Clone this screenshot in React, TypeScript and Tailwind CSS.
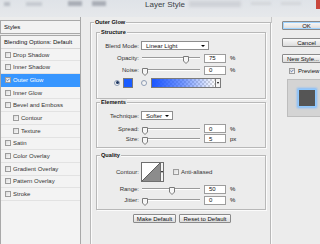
import { Check } from 'lucide-react';
import type { ReactNode } from 'react';

const font = { fontFamily: '"Liberation Sans", Arial, sans-serif' };

const styleRows = [
  { name: 'Drop Shadow' },
  { name: 'Inner Shadow' },
  { name: 'Outer Glow', checked: true, active: true },
  { name: 'Inner Glow' },
  { name: 'Bevel and Emboss' },
  { name: 'Contour', indent: true },
  { name: 'Texture', indent: true },
  { name: 'Satin' },
  { name: 'Color Overlay' },
  { name: 'Gradient Overlay' },
  { name: 'Pattern Overlay' },
  { name: 'Stroke' },
];

const CheckBox = ({ checked = false }: { checked?: boolean }) => (
  <span className="flex h-[6px] w-[6px] shrink-0 items-center justify-center border border-[#9c9c9c] bg-gradient-to-br from-[#dcdcdc] to-[#f8f8f8]">
    {checked && <Check size={6} strokeWidth={4} className="text-[#1b3f8f]" />}
  </span>
);

const Group = ({ title, className, children }: { title: string; className: string; children: ReactNode }) => (
  <div className={'relative border border-[#b8b8b8] shadow-[inset_1px_1px_0_#fbfbfb,1px_1px_0_#fbfbfb] ' + className}>
    <span className="absolute -top-[4px] left-[3px] bg-[#ececec] px-[1px] text-[5.6px] font-bold leading-[7px] text-[#111]">
      {title}
    </span>
    {children}
  </div>
);

const Thumb = () => (
  <svg width="6" height="8" viewBox="0 0 6 8" className="-mt-[3px]">
    <path d="M0.5 0.5 H5.5 V5 L3 7.5 L0.5 5 Z" fill="#f6f6f6" stroke="#7a7a7a" strokeWidth="1" />
  </svg>
);

const Slider = ({ pct }: { pct: number }) => (
  <div className="ml-[3px] flex h-[9px] w-[58px] flex-col justify-center">
    <div className="h-[2px] w-full border-t border-[#9a9a9a] bg-white" />
    <div className="flex h-0 items-start" style={{ paddingLeft: `${(pct / 100) * 54}px` }}>
      <Thumb />
    </div>
  </div>
);

const NumBox = ({ value }: { value: string }) => (
  <div className="ml-[4px] flex h-[9px] w-[22px] items-center border border-[#9d9d9d] bg-white pl-[4px] text-[6px] leading-none">
    {value}
  </div>
);

const Label = ({ children }: { children: ReactNode }) => (
  <span className="w-[42px] shrink-0 text-right text-[6px] leading-none text-[#333]">{children}</span>
);

const SliderRow = ({ label, pct, value, unit, className }: { label: string; pct: number; value: string; unit: string; className: string }) => (
  <div className={'flex h-[9px] items-center ' + className}>
    <Label>{label}</Label>
    <Slider pct={pct} />
    <NumBox value={value} />
    <span className="ml-[4px] text-[6px] leading-none">{unit}</span>
  </div>
);

const Select = ({ value, width }: { value: string; width: string }) => (
  <div className={'ml-[2px] flex h-[9px] items-center justify-between border border-[#8e8e8e] bg-white pl-[4px] pr-[3px] text-[6px] leading-none ' + width}>
    <span>{value}</span>
    <span className="h-0 w-0 border-x-[2px] border-t-[2.5px] border-x-transparent border-t-black" />
  </div>
);

const Radio = ({ on = false }: { on?: boolean }) => (
  <span className="flex h-[6px] w-[6px] items-center justify-center rounded-full border border-[#8f9eb5] bg-gradient-to-br from-[#e6e6e6] to-white">
    {on && <span className="h-[3px] w-[3px] rounded-full bg-[#1c3560]" />}
  </span>
);

const Button = ({ children, className }: { children: ReactNode; className: string }) => (
  <div className={'flex h-[9px] items-center justify-center rounded-[1px] border border-[#8a8a8a] bg-gradient-to-b from-[#fafafa] to-[#dcdcdc] text-[6px] leading-none text-[#111] ' + className}>
    {children}
  </div>
);

export default function App() {
  return (
    <div className="flex h-[244px] w-[320px] flex-col overflow-hidden bg-[#ececec] text-[#111]" style={font}>
      <div className="flex h-[17px] shrink-0 items-start bg-gradient-to-b from-[#dfe3e8] to-[#e6e8eb]">
        <div className="ml-[4px] mt-[2px] h-[4px] w-[6px] bg-[#b9bec5] blur-[1px]" />
        <div className="ml-[16px] mt-[2px] h-[4px] w-[16px] bg-[#c6cad0] blur-[1px]" />
        <div className="ml-[26px] mt-[1px] h-[5px] w-[14px] bg-[#a9aeb6] blur-[1px]" />
        <div className="ml-[10px] mt-[1px] h-[5px] w-[14px] bg-[#a9aeb6] blur-[1px]" />
        <span className="ml-[39px] mt-[0px] text-[8px] leading-[10px] text-[#3a3f47]">Layer Style</span>
        <div className="ml-[4px] mt-[1px] h-[6px] w-[52px] bg-[#cfd2d7] blur-[1.5px]" />
        <div className="ml-[10px] mt-[2px] h-[3px] w-[20px] bg-[#d3d6da] blur-[1px]" />
        <div className="ml-[10px] mt-[2px] h-[3px] w-[20px] bg-[#d3d6da] blur-[1px]" />
        <div className="ml-auto h-[9px] w-[4px] bg-[#c9473d]" />
      </div>

      <div className="flex flex-1">
        <div className="flex w-[81px] shrink-0 flex-col border-r border-[#a8a8a8] pt-[3px]">
          <div className="flex h-[14px] items-center border-y border-l border-[#a8a8a8] bg-[#f2f2f2] pl-[3px] text-[6px] leading-none">
            Styles
          </div>
          <div className="mt-[1px] flex flex-1 flex-col border-l border-t border-[#a8a8a8] bg-[#f3f3f3]">
            <div className="flex h-[12.7px] shrink-0 items-center border-b border-[#d6d6d6] pl-[3px] text-[6px] leading-none">
              Blending Options: Default
            </div>
            {styleRows.map((r) => (
              <div
                key={r.name}
                className={
                  'flex h-[12.7px] shrink-0 items-center gap-[2px] border-b text-[6px] leading-none ' +
                  (r.active ? 'border-[#3796ff] bg-[#3796ff] text-white' : 'border-[#e2e2e2] text-[#333]') +
                  (r.indent ? ' pl-[12px]' : ' pl-[4px]')
                }
              >
                <CheckBox checked={r.checked} />
                <span>{r.name}</span>
              </div>
            ))}
          </div>
        </div>

        <div className="w-[190px] shrink-0 pl-[9px] pt-[5px]">
          <Group title="Outer Glow" className="h-[240px] w-[181px] border-b-0 pl-[5px] pr-[4px] pt-[9px]">
            <Group title="Structure" className="h-[67px] pt-[8px]">
              <div className="flex h-[9px] items-center">
                <Label>Blend Mode:</Label>
                <Select value="Linear Light" width="w-[68px]" />
              </div>
              <SliderRow label="Opacity:" pct={75} value="75" unit="%" className="mt-[3.5px]" />
              <SliderRow label="Noise:" pct={0} value="0" unit="%" className="mt-[3px]" />
              <div className="mt-[3px] flex h-[10px] items-center">
                <span className="ml-[17px]"><Radio on /></span>
                <span className="ml-[3px] h-[10px] w-[10px] border border-[#7a7a7a] bg-[#1a5cff]" />
                <span className="ml-[8px]"><Radio /></span>
                <div className="ml-[4px] flex h-[10px] w-[70px] border border-[#7a7a7a]">
                  <div className="flex-1 bg-[repeating-conic-gradient(#d9d9d9_0%_25%,#ffffff_0%_50%)] bg-[length:4px_4px]">
                    <div className="h-full w-full bg-gradient-to-r from-[#1a55ff] via-[#1a55ff99] to-transparent" />
                  </div>
                  <div className="flex w-[5px] items-center justify-center border-l border-[#7a7a7a] bg-[#f4f4f4]">
                    <span className="h-0 w-0 border-x-[1.5px] border-t-[2px] border-x-transparent border-t-black" />
                  </div>
                </div>
              </div>
            </Group>

            <Group title="Elements" className="mt-[3px] h-[46px] pt-[8px]">
              <div className="flex h-[9px] items-center">
                <Label>Technique:</Label>
                <Select value="Softer" width="w-[32px]" />
              </div>
              <SliderRow label="Spread:" pct={0} value="0" unit="%" className="mt-[4px]" />
              <SliderRow label="Size:" pct={0} value="5" unit="px" className="mt-[1px]" />
            </Group>

            <Group title="Quality" className="mt-[7px] h-[55px] pt-[6px]">
              <div className="flex h-[20px] items-center">
                <Label>Contour:</Label>
                <div className="ml-[2px] flex h-[20px] w-[23px] border border-[#6f6f6f] bg-white">
                  <svg width="18" height="18" viewBox="0 0 18 18" className="shrink-0">
                    <polygon points="0,18 18,0 18,18" fill="#8c8c8c" />
                    <line x1="0" y1="18" x2="18" y2="0" stroke="#444" strokeWidth="0.8" />
                  </svg>
                  <div className="flex flex-1 items-center justify-center border-l border-[#6f6f6f] bg-[#f4f4f4]">
                    <span className="h-0 w-0 border-x-[1.5px] border-t-[2px] border-x-transparent border-t-black" />
                  </div>
                </div>
                <span className="ml-[9px]"><CheckBox /></span>
                <span className="ml-[2px] text-[6px] leading-none text-[#333]">Anti-aliased</span>
              </div>
              <SliderRow label="Range:" pct={50} value="50" unit="%" className="mt-[2.5px]" />
              <SliderRow label="Jitter:" pct={0} value="0" unit="%" className="mt-[2px]" />
            </Group>

            <div className="mt-[4px] flex gap-[3px] pl-[37px]">
              <Button className="w-[43px]">Make Default</Button>
              <Button className="w-[52px]">Reset to Default</Button>
            </div>
          </Group>
        </div>

        <div className="flex flex-1 flex-col border-l border-[#c6c6c6] pl-[10px] pt-[4px]">
          <Button className="w-[49px] border-[#3c9ae6] shadow-[inset_0_0_0_1px_#9fd3ff]">OK</Button>
          <Button className="mt-[8px] w-[49px]">Cancel</Button>
          <Button className="mt-[7px] w-[49px] justify-start pl-[4px]">New Style...</Button>
          <div className="ml-[7px] mt-[5px] flex items-center gap-[3px]">
            <CheckBox checked />
            <span className="text-[6px] leading-none">Preview</span>
          </div>
          <div className="ml-[5px] mt-[5px] flex h-[38px] w-[40px] items-center justify-center border border-[#bdbdbd] bg-[#d4d4d4]">
            <div className="h-[18px] w-[18px] border border-[#8ec8ff] bg-[#555555] shadow-[0_0_2px_1px_#7dbcff]" />
          </div>
        </div>
      </div>
    </div>
  );
}
